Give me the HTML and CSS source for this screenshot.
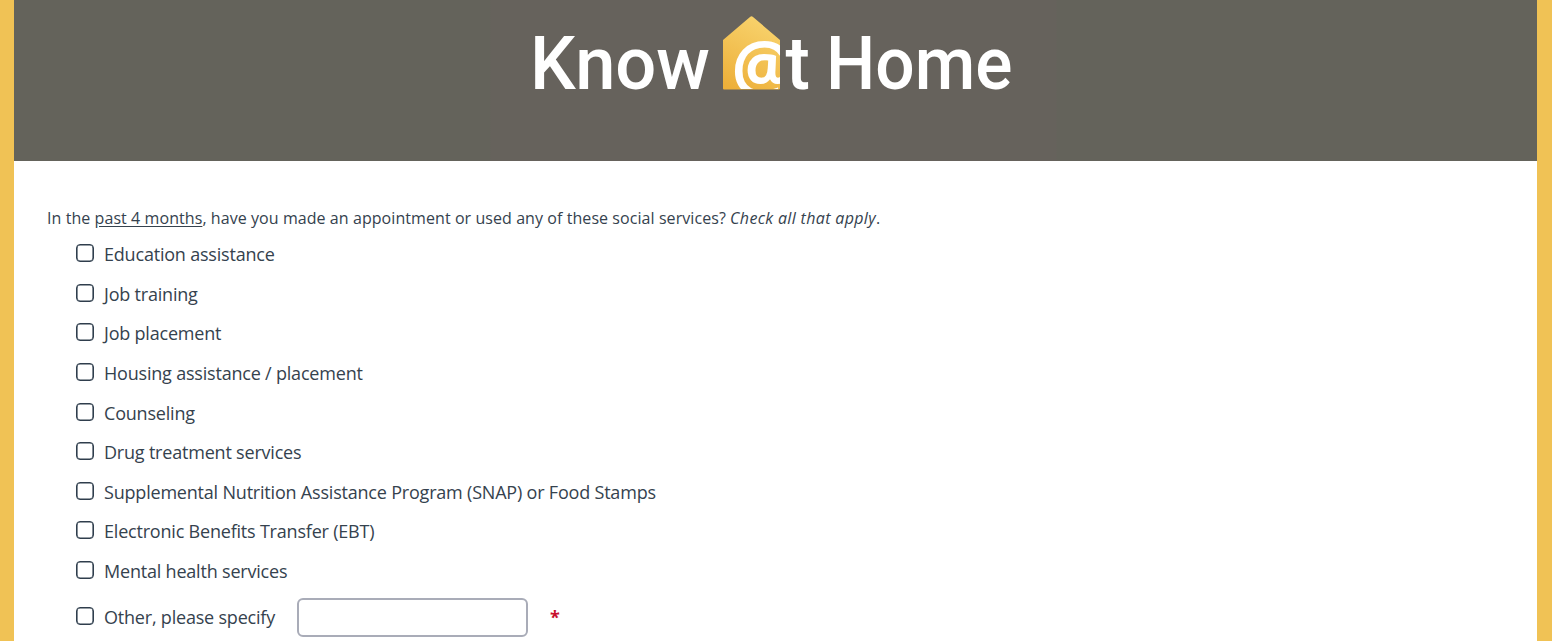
FILE: index.html
```html
<!DOCTYPE html>
<html lang="en">
<head>
  <meta charset="UTF-8">
  <meta name="viewport" content="width=device-width, initial-scale=1.0">
  <title>Know @t Home</title>
  <link rel="stylesheet" href="styles.css">
</head>
<body>
  <div class="page">
    <header class="banner">
      <svg class="logo" width="500" height="120" viewBox="0 0 500 120" role="img" aria-label="Know @t Home">
        <defs>
          <linearGradient id="houseFill" x1="0.2" y1="1" x2="0.6" y2="0">
            <stop offset="0" stop-color="#edb03a"/>
            <stop offset="1" stop-color="#f8d26c"/>
          </linearGradient>
          <clipPath id="houseClip">
            <path d="M197 40L224 17Q225.500 15.500 227 17L254 40V89H197Z"/>
          </clipPath>
        </defs>
        <text class="logo-text" x="4" y="89" textLength="180" lengthAdjust="spacingAndGlyphs">Know</text>
        <path d="M197 40L224 17Q225.500 15.500 227 17L254 40V88.500Q254 89.500 253 89.500H198Q197 89.500 197 88.500Z" fill="url(#houseFill)"/>
        <text class="logo-at" x="205.500" y="91" clip-path="url(#houseClip)">@</text>
        <text class="logo-text" x="259.500" y="89">t</text>
        <text class="logo-text" x="300" y="89" textLength="186.500" lengthAdjust="spacingAndGlyphs">Home</text>
      </svg>
    </header>

    <form class="survey">
      <p class="question">In the <u>past 4 months</u>, have you made an appointment or used any of these social services? <em>Check all that apply</em>.</p>
      <div class="options">
        <label class="option"><input type="checkbox" name="education"><span>Education assistance</span></label>
        <label class="option"><input type="checkbox" name="training"><span>Job training</span></label>
        <label class="option"><input type="checkbox" name="job"><span>Job placement</span></label>
        <label class="option"><input type="checkbox" name="housing"><span>Housing assistance / placement</span></label>
        <label class="option"><input type="checkbox" name="counseling"><span>Counseling</span></label>
        <label class="option"><input type="checkbox" name="drug"><span>Drug treatment services</span></label>
        <label class="option"><input type="checkbox" name="snap"><span>Supplemental Nutrition Assistance Program (SNAP) or Food Stamps</span></label>
        <label class="option"><input type="checkbox" name="ebt"><span>Electronic Benefits Transfer (EBT)</span></label>
        <label class="option"><input type="checkbox" name="mental"><span>Mental health services</span></label>
        <div class="option other">
          <label class="option"><input type="checkbox" name="other"><span>Other, please specify</span></label>
          <input type="text" class="other-text" name="otherText">
          <span class="required">*</span>
        </div>
      </div>
    </form>
  </div>
</body>
</html>
```
FILE: styles.css
```css
* {
  box-sizing: border-box;
}
body {
  margin: 0;
  height: 641px;
  overflow: hidden;
  background-color: #f0c255;
  font-family: "Open Sans", sans-serif;
  color: #35424e;
}
.page {
  margin: 0 15px 0 14px;
  height: 641px;
  background-color: #fff;
}
.banner {
  height: 161px;
  padding-left: 512px;
  background: linear-gradient(90deg, #64635b 476px, #66625c 477px, #66625c 1042px, #64635b 1043px);
}
.logo {
  display: block;
}
.logo-text {
  font-family: Roboto, sans-serif;
  font-size: 73.500px;
  font-weight: 500;
  fill: #fff;
}
.logo-at {
  font-family: "Open Sans", sans-serif;
  font-size: 69px;
  font-weight: 700;
  fill: #fff;
}
.survey {
  padding: 45px 33px 0;
}
.question {
  margin: 0;
  font-size: 16px;
  line-height: 24px;
  letter-spacing: 0.070px;
}
.question u {
  text-underline-offset: 2px;
}
.question em {
  letter-spacing: 0.340px;
}
.options {
  padding: 4.400px 0 0 29px;
}
.option {
  display: flex;
  align-items: center;
  height: 39.600px;
  font-size: 18px;
  letter-spacing: -0.200px;
}
.option input[type="checkbox"] {
  appearance: none;
  flex: none;
  width: 18px;
  height: 18px;
  margin: 0 10px 2px 0;
  border: 1px solid #2f3e4d;
  border-radius: 4px;
  background-color: #fff;
  box-shadow: inset 0 0 0 0.600px #2f3e4d;
}
.other {
  height: 53px;
}
.other-text {
  width: 231px;
  height: 39px;
  margin-left: 22px;
  padding: 0 8px;
  border: 2px solid #a9acb8;
  border-radius: 6px;
  font: inherit;
}
.required {
  margin-left: 22px;
  color: #c8102e;
  font-weight: 700;
}
```
